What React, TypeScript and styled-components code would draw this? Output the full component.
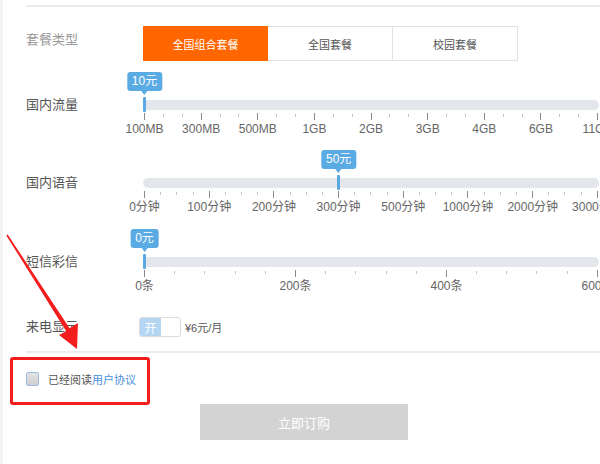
import React from 'react';
import styled, { createGlobalStyle } from 'styled-components';

const GlobalStyle = createGlobalStyle`
  html, body { margin: 0; padding: 0; background: #fff; }
  body { font-family: "Liberation Sans", "Noto Sans CJK SC", sans-serif; }
`;

const Page = styled.div`
  position: relative;
  width: 600px;
  height: 464px;
  overflow: hidden;
  box-sizing: border-box;
  padding: 5px 0 0 26px;
  background: #fff;
  box-shadow: inset 3px 0 0 #f3f3f3;
`;

const Rule = styled.div<{ $top: number }>`
  height: 2px;
  background: #ececec;
  margin-top: ${p => p.$top}px;
`;

const Row = styled.div<{ $top: number; $align?: string }>`
  display: flex;
  align-items: ${p => p.$align ?? 'center'};
  margin-top: ${p => p.$top}px;
`;

const Label = styled.div<{ $muted?: boolean; $pad?: number; $width?: number }>`
  width: ${p => p.$width ?? 117}px;
  flex-shrink: 0;
  font-size: 13px;
  line-height: 18px;
  padding-top: ${p => p.$pad ?? 0}px;
  color: ${p => (p.$muted ? '#999' : '#555')};
`;

const Tabs = styled.div`
  display: flex;
`;

const Tab = styled.div<{ $active?: boolean; $first?: boolean }>`
  width: 125px;
  height: 35px;
  box-sizing: border-box;
  display: flex;
  align-items: center;
  justify-content: center;
  font-size: 11px;
  border: 1px solid ${p => (p.$active ? '#ff6600' : '#e2e2e2')};
  border-left-width: ${p => (p.$first ? 1 : 0)}px;
  background: ${p => (p.$active ? '#ff6600' : '#fff')};
  color: ${p => (p.$active ? '#fff' : '#555')};
`;

const SliderArea = styled.div`
  width: 456px;
  padding-top: 28px;
  flex-shrink: 0;
`;

const Track = styled.div`
  position: relative;
  height: 10px;
  border-radius: 5px;
  background: #e3e6ea;
`;

const Handle = styled.div`
  position: absolute;
  top: -3px;
  width: 3px;
  height: 15px;
  border-radius: 1px;
  background: #5aa9e2;
`;

const Tip = styled.div`
  position: absolute;
  bottom: 19px;
  transform: translateX(-50%);
  padding: 0 5px;
  border-radius: 3px;
  background: #5aaae3;
  color: #fff;
  font-size: 12px;
  line-height: 19px;
  white-space: nowrap;

  &::after {
    content: '';
    position: absolute;
    left: 50%;
    top: 100%;
    margin-left: -3px;
    border: 3px solid transparent;
    border-top: 4px solid #5aaae3;
    border-bottom: 0;
  }
`;

const Ticks = styled.div`
  display: flex;
  justify-content: space-between;
  align-items: flex-start;
  height: 7px;
  margin-top: 3px;
  padding: 0 1px;
`;

const Tick = styled.div<{ $major: boolean }>`
  width: 1px;
  height: ${p => (p.$major ? 7 : 3)}px;
  margin-top: ${p => (p.$major ? 0 : 1)}px;
  background: ${p => (p.$major ? '#8a8a8a' : '#c4c4c4')};
`;

const TickLabels = styled.div`
  display: flex;
  justify-content: space-between;
  margin-top: 2px;
  padding: 0 1.5px;
  height: 14px;
`;

const TickLabel = styled.div`
  width: 0;
  display: flex;
  justify-content: center;
  white-space: nowrap;
  font-size: 12px;
  line-height: 14px;
  color: #666;
`;

const Switch = styled.div`
  display: flex;
  width: 42px;
  height: 20px;
  box-sizing: border-box;
  border: 1px solid #dcdcdc;
  border-radius: 3px;
  overflow: hidden;
`;

const SwitchOn = styled.div`
  width: 21px;
  display: flex;
  align-items: center;
  justify-content: center;
  background: #b4d6f3;
  color: #fff;
  font-size: 12px;
`;

const Price = styled.span`
  margin-left: 4px;
  font-size: 11px;
  color: #555;
`;

const Agree = styled.label`
  display: flex;
  align-items: center;
  height: 14px;
  font-size: 11px;
  color: #555;
`;

const Check = styled.span`
  width: 13px;
  height: 14px;
  box-sizing: border-box;
  margin-right: 9px;
  border: 1.5px solid #9cbae7;
  border-radius: 2px;
  background: linear-gradient(#e4e4e4, #cfcfcf);
`;

const Link = styled.span`
  color: #4a90d9;
`;

const BuyButton = styled.div`
  margin: 18px 0 0 174px;
  width: 208px;
  height: 36px;
  display: flex;
  align-items: center;
  justify-content: center;
  background: #d3d3d3;
  color: #fff;
  font-size: 13px;
`;

const Callout = styled.div`
  position: absolute;
  left: 10px;
  top: 357px;
  width: 140px;
  height: 48px;
  box-sizing: border-box;
  border: 3px solid #f41d1d;
  border-radius: 3px;
`;

const ArrowLayer = styled.svg`
  position: absolute;
  left: 0;
  top: 0;
  pointer-events: none;
`;

interface SliderProps {
  labels: string[];
  minors: number;
  at: number;
  price: string;
}

const Slider: React.FC<SliderProps> = ({ labels, minors, at, price }) => {
  const total = (labels.length - 1) * (minors + 1);
  const ticks = Array.from({ length: total + 1 }, (_, i) => i % (minors + 1) === 0);
  const x = (at / (labels.length - 1)) * 453;
  return (
    <SliderArea>
      <Track>
        <Handle style={{ left: x }} />
        <Tip style={{ left: x + 1.5 }}>{price}</Tip>
      </Track>
      <Ticks>
        {ticks.map((major, i) => (
          <Tick key={i} $major={major} />
        ))}
      </Ticks>
      <TickLabels>
        {labels.map(l => (
          <TickLabel key={l}>{l}</TickLabel>
        ))}
      </TickLabels>
    </SliderArea>
  );
};

const App: React.FC = () => {
  return (
    <>
      <GlobalStyle />
      <Page>
        <Rule $top={0} />
        <Row $top={19} $align="flex-start">
          <Label $muted $pad={5}>套餐类型</Label>
          <Tabs>
            <Tab $active $first>全国组合套餐</Tab>
            <Tab>全国套餐</Tab>
            <Tab>校园套餐</Tab>
          </Tabs>
        </Row>

        <Row $top={11} $align="flex-start">
          <Label $pad={24}>国内流量</Label>
          <Slider
            labels={['100MB', '300MB', '500MB', '1GB', '2GB', '3GB', '4GB', '6GB', '11GB']}
            minors={2}
            at={0}
            price="10元"
          />
        </Row>

        <Row $top={14} $align="flex-start">
          <Label $pad={24}>国内语音</Label>
          <Slider
            labels={['0分钟', '100分钟', '200分钟', '300分钟', '500分钟', '1000分钟', '2000分钟', '3000分钟']}
            minors={3}
            at={3}
            price="50元"
          />
        </Row>

        <Row $top={15} $align="flex-start">
          <Label $pad={24}>短信彩信</Label>
          <Slider labels={['0条', '200条', '400条', '600条']} minors={4} at={0} price="0元" />
        </Row>

        <Row $top={24}>
          <Label $width={113}>来电显示</Label>
          <Switch>
            <SwitchOn>开</SwitchOn>
          </Switch>
          <Price>¥6元/月</Price>
        </Row>

        <Rule $top={14} />

        <Row $top={19}>
          <Agree>
            <Check />
            已经阅读<Link>用户协议</Link>
          </Agree>
        </Row>

        <BuyButton>立即订购</BuyButton>

        <Callout />
        <ArrowLayer width="600" height="464" viewBox="0 0 600 464">
          <polygon
            points="6.3,235.4 7.7,234.6 69.6,328.2 78,323 77,349 59,335 66.2,331.3"
            fill="#f41d1d"
          />
        </ArrowLayer>
      </Page>
    </>
  );
};

export default App;
